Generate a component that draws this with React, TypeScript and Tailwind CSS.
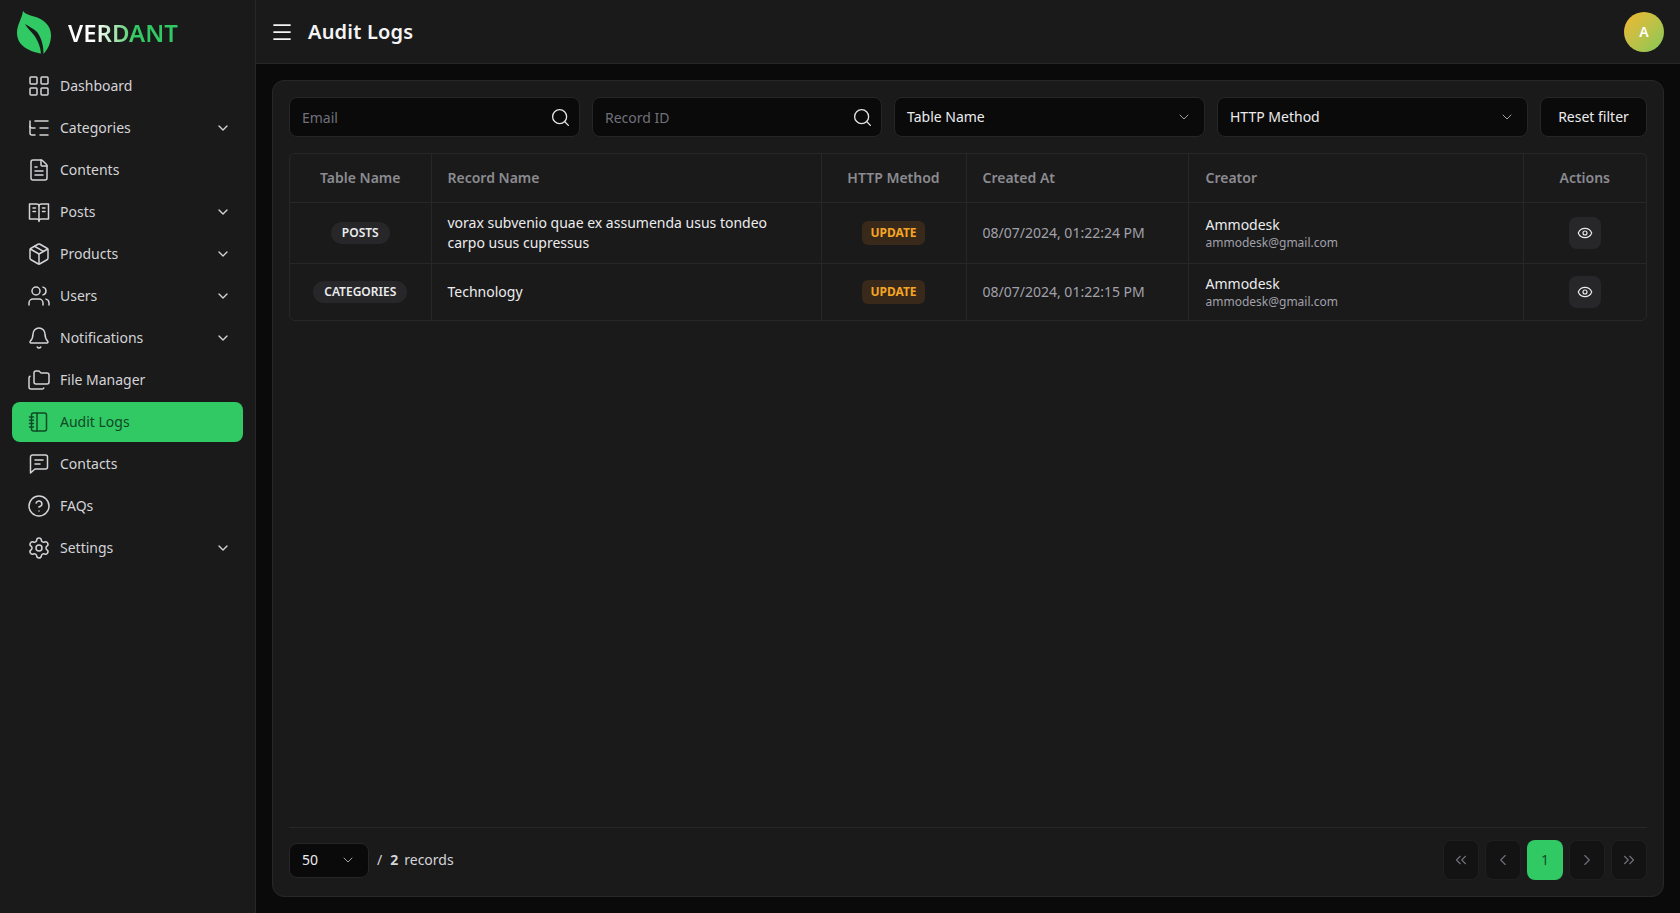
import { useState } from 'react';
import {
  Bell,
  ChevronDown,
  ChevronLeft,
  ChevronRight,
  ChevronsLeft,
  ChevronsRight,
  CircleHelp,
  Eye,
  FileText,
  Folders,
  LayoutGrid,
  ListTree,
  Menu,
  Package,
  Search,
  Settings,
  Users,
} from 'lucide-react';

const BookIcon = () => (
  <svg width="24" height="24" viewBox="0 0 24 24" fill="none" stroke="currentColor" strokeWidth="1.5" strokeLinecap="round" strokeLinejoin="round">
    <path d="M2.5 4h7c1.4 0 2.5.9 2.5 2 0-1.1 1.100-2 2.500-2h7v15h-7c-1.400 0-2.500.6-2.500 1.500 0-.9-1.100-1.500-2.500-1.500h-7z" />
    <path d="M12 6v15.500" />
    <path d="M6 8h2.500M6 11.500h2.500M15.500 8H18M15.500 11.500H18" />
  </svg>
);

const NotebookIcon = () => (
  <svg width="24" height="24" viewBox="0 0 24 24" fill="none" stroke="currentColor" strokeWidth="1.5" strokeLinecap="round" strokeLinejoin="round">
    <rect x="4.500" y="3" width="15" height="18" rx="2" />
    <path d="M10 3v18" />
    <path d="M2.500 7h4M2.500 10.300h4M2.500 13.600h4M2.500 17h4" />
  </svg>
);

const ChatIcon = () => (
  <svg width="24" height="24" viewBox="0 0 24 24" fill="none" stroke="currentColor" strokeWidth="1.5" strokeLinecap="round" strokeLinejoin="round">
    <path d="M3.500 5a2 2 0 0 1 2-2h13a2 2 0 0 1 2 2v10a2 2 0 0 1-2 2H8l-4.500 4z" />
    <path d="M8 8h8M8 12h5" />
  </svg>
);

const navItems = [
  { label: 'Dashboard', icon: <LayoutGrid size={24} strokeWidth={1.5} /> },
  { label: 'Categories', icon: <ListTree size={24} strokeWidth={1.5} />, hasChildren: true },
  { label: 'Contents', icon: <FileText size={24} strokeWidth={1.5} /> },
  { label: 'Posts', icon: <BookIcon />, hasChildren: true },
  { label: 'Products', icon: <Package size={24} strokeWidth={1.5} />, hasChildren: true },
  { label: 'Users', icon: <Users size={24} strokeWidth={1.5} />, hasChildren: true },
  { label: 'Notifications', icon: <Bell size={24} strokeWidth={1.5} />, hasChildren: true },
  { label: 'File Manager', icon: <Folders size={24} strokeWidth={1.5} /> },
  { label: 'Audit Logs', icon: <NotebookIcon />, active: true },
  { label: 'Contacts', icon: <ChatIcon /> },
  { label: 'FAQs', icon: <CircleHelp size={24} strokeWidth={1.5} /> },
  { label: 'Settings', icon: <Settings size={24} strokeWidth={1.5} />, hasChildren: true },
];

const logs = [
  {
    table: 'POSTS',
    record: 'vorax subvenio quae ex assumenda usus tondeo carpo usus cupressus',
    createdAt: '08/07/2024, 01:22:24 PM',
    rowClass: 'h-[61px]',
  },
  {
    table: 'CATEGORIES',
    record: 'Technology',
    createdAt: '08/07/2024, 01:22:15 PM',
    rowClass: 'h-[57px]',
  },
];

const Sidebar = () => (
  <aside className="w-64 shrink-0 bg-[#1a1a1a] border-r border-[#27272a]">
    <div className="h-[65px] mb-px flex items-center pl-[17px]">
      <svg width="34" height="43" viewBox="0 0 34 43" fill="none">
        <path d="M6 0C8 3 12 4 17 5.500C26 8 34 14 34 24C34 32 31 38 26.500 43C26.500 34 24.500 27 20 21C16.500 17.500 11 15 8 13C10 17 14.500 20.500 18 25.500C21 30 23.500 36 24 42.500C15 41 0 36 0 22C0 13 5 8 6 0Z" fill="#31c964" />
      </svg>
      <span className="ml-[17px] text-2xl leading-none font-semibold bg-linear-to-r from-white from-25% to-[#31c964] to-60% bg-clip-text text-transparent">
        VERDANT
      </span>
    </div>
    <nav className="px-3 flex flex-col gap-0.5">
      {navItems.map((item) => (
        <div
          key={item.label}
          className={`h-10 pl-[15px] pr-3 flex items-center gap-[9px] rounded-lg text-sm ${
            item.active ? 'bg-[#31c964] text-[#0f4a25]' : 'text-[#d4d4d8]'
          }`}
        >
          {item.icon}
          <span className="flex-1">{item.label}</span>
          {item.hasChildren && <ChevronDown size={16} className="text-[#d4d4d8]" />}
        </div>
      ))}
    </nav>
  </aside>
);

const SearchField = ({ placeholder, className }: { placeholder: string; className: string }) => {
  const [value, setValue] = useState('');
  return (
    <div className={`h-10 pl-3 pr-2 flex items-center rounded-lg bg-[#0a0a0b] border border-[#26262a] ${className}`}>
      <input
        value={value}
        onChange={(e) => setValue(e.target.value)}
        placeholder={placeholder}
        className="flex-1 min-w-0 pt-0.5 bg-transparent outline-none text-sm text-white placeholder:text-[#71717a]"
      />
      <Search size={21} strokeWidth={1.5} className="text-[#e4e4e7]" />
    </div>
  );
};

const FilterSelect = ({ label, className }: { label: string; className: string }) => (
  <div className={`h-10 px-3 flex items-center justify-between rounded-lg bg-[#0a0a0b] border border-[#26262a] text-sm text-[#ececee] ${className}`}>
    <span>{label}</span>
    <ChevronDown size={16} strokeWidth={1.5} className="text-[#a1a1aa]" />
  </div>
);

const PageButton = ({ children }: { children: React.ReactNode }) => (
  <button className="w-9 h-10 flex items-center justify-center rounded-lg bg-[#131314] border border-[#1f1f21] text-[#71717a]">
    {children}
  </button>
);

const headCell = 'px-4 text-sm font-semibold text-[#8b8b91] border-r border-[#27272a]';
const bodyCell = 'px-4 text-sm border-r border-t border-[#27272a]';

const AuditTable = () => (
  <div className="mt-4 border border-[#27272a] rounded-md overflow-hidden">
    <table className="w-full table-fixed border-collapse">
      <colgroup>
        <col className="w-[141px]" />
        <col className="w-[390px]" />
        <col className="w-[145px]" />
        <col className="w-[222px]" />
        <col className="w-[335px]" />
        <col />
      </colgroup>
      <thead>
        <tr className="h-12">
          <th className={`${headCell} text-center`}>Table Name</th>
          <th className={`${headCell} text-left`}>Record Name</th>
          <th className={`${headCell} text-center !px-0`}>HTTP Method</th>
          <th className={`${headCell} text-left`}>Created At</th>
          <th className={`${headCell} text-left !pl-[17px]`}>Creator</th>
          <th className={`${headCell} text-center border-r-0`}>Actions</th>
        </tr>
      </thead>
      <tbody>
        {logs.map((log) => (
          <tr key={log.table} className={log.rowClass}>
            <td className={`${bodyCell} text-center`}>
              <span className="inline-flex items-center h-[22px] px-[11px] rounded-full bg-[#27272a] text-xs font-semibold text-[#ececee]">
                {log.table}
              </span>
            </td>
            <td className={`${bodyCell} text-[#ececee] leading-5`}>{log.record}</td>
            <td className={`${bodyCell} text-center !px-0`}>
              <span className="inline-flex items-center h-6 px-2 rounded-md bg-[#38291a] text-xs font-bold text-[#f5a524]">
                UPDATE
              </span>
            </td>
            <td className={`${bodyCell} text-[#a1a1aa]`}>{log.createdAt}</td>
            <td className={`${bodyCell} !pl-[17px]`}>
              <div className="pt-px text-[#ececee] leading-[18px]">Ammodesk</div>
              <div className="text-xs leading-[17px] text-[#a1a1aa]">ammodesk@gmail.com</div>
            </td>
            <td className={`${bodyCell} border-r-0`}>
              <button className="mx-auto w-8 h-8 flex items-center justify-center rounded-lg bg-[#27272a] text-[#ececee]">
                <Eye size={16} strokeWidth={1.75} />
              </button>
            </td>
          </tr>
        ))}
      </tbody>
    </table>
  </div>
);

export default function App() {
  return (
    <div className="h-screen flex bg-[#0a0a0b] font-['Noto_Sans',sans-serif] overflow-hidden">
      <Sidebar />
      <div className="flex-1 min-w-0 flex flex-col">
        <header className="h-16 shrink-0 pl-[14px] pr-4 flex items-center bg-[#1a1a1a] border-b border-[#27272a]">
          <Menu size={24} strokeWidth={1.75} className="text-[#f4f4f5]" />
          <h1 className="ml-[14px] text-xl font-semibold tracking-[0.2px] text-[#f4f4f5]">Audit Logs</h1>
          <div className="ml-auto w-10 h-10 rounded-full bg-linear-to-br from-[#f0b72f] to-[#7fc857] flex items-center justify-center text-sm font-semibold text-white">
            A
          </div>
        </header>
        <main className="flex-1 min-h-0 p-4">
          <div className="h-full flex flex-col px-4 pt-4 pb-4 rounded-xl bg-[#1a1a1a] border border-[#27272a]">
            <div className="flex gap-3">
              <SearchField placeholder="Email" className="w-[291px]" />
              <SearchField placeholder="Record ID" className="w-[290px]" />
              <FilterSelect label="Table Name" className="w-[311px]" />
              <FilterSelect label="HTTP Method" className="w-[311px]" />
              <button className="flex-1 h-10 rounded-lg bg-[#0a0a0b] border border-[#26262a] text-sm text-[#ececee]">
                Reset filter
              </button>
            </div>
            <div className="flex-1 min-h-0">
              <AuditTable />
            </div>
            <div className="pt-3 flex items-center justify-between border-t border-[#27272a]">
              <div className="flex items-center text-sm text-[#d4d4d8]">
                <div className="w-20 h-[35px] pl-3 pr-3 flex items-center justify-between rounded-lg bg-[#0a0a0b] border border-[#26262a] text-[#ececee]">
                  <span>50</span>
                  <ChevronDown size={16} strokeWidth={1.5} className="text-[#a1a1aa]" />
                </div>
                <span className="ml-2">/</span>
                <span className="ml-2 font-bold">2</span>
                <span className="ml-1.5">records</span>
              </div>
              <div className="flex gap-1.5">
                <PageButton><ChevronsLeft size={18} strokeWidth={1.5} /></PageButton>
                <PageButton><ChevronLeft size={18} strokeWidth={1.5} /></PageButton>
                <button className="w-9 h-10 rounded-lg bg-[#31c964] text-sm text-[#0f4a25]">1</button>
                <PageButton><ChevronRight size={18} strokeWidth={1.5} /></PageButton>
                <PageButton><ChevronsRight size={18} strokeWidth={1.5} /></PageButton>
              </div>
            </div>
          </div>
        </main>
      </div>
    </div>
  );
}
